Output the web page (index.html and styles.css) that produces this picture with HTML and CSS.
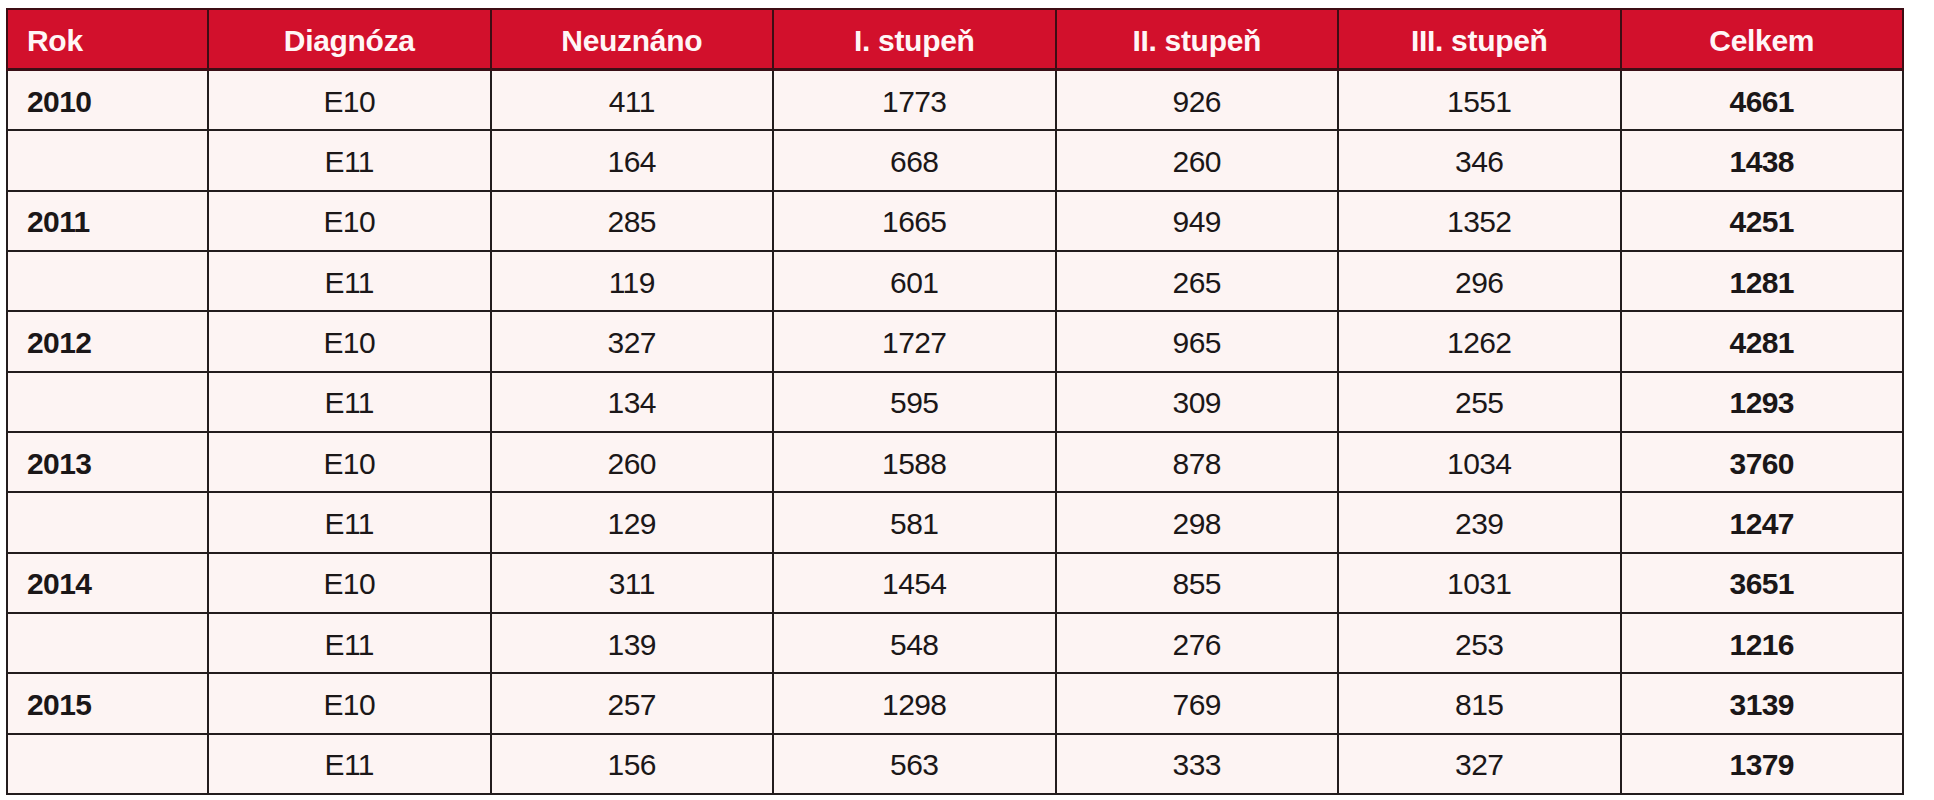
FILE: index.html
```html
<!DOCTYPE html>
<html lang="cs">
<head>
<meta charset="utf-8">
<title>Tabulka</title>
<link rel="stylesheet" href="styles.css">
</head>
<body>
<table class="data">
  <colgroup>
    <col class="c-rok"><col class="c-n"><col class="c-n"><col class="c-n"><col class="c-n"><col class="c-n"><col class="c-n">
  </colgroup>
  <thead>
    <tr><th class="left">Rok</th><th>Diagnóza</th><th>Neuznáno</th><th>I. stupeň</th><th>II. stupeň</th><th>III. stupeň</th><th>Celkem</th></tr>
  </thead>
  <tbody>
    <tr><td class="year">2010</td><td>E10</td><td>411</td><td>1773</td><td>926</td><td>1551</td><td class="total">4661</td></tr>
    <tr><td class="year"></td><td>E11</td><td>164</td><td>668</td><td>260</td><td>346</td><td class="total">1438</td></tr>
    <tr><td class="year">2011</td><td>E10</td><td>285</td><td>1665</td><td>949</td><td>1352</td><td class="total">4251</td></tr>
    <tr><td class="year"></td><td>E11</td><td>119</td><td>601</td><td>265</td><td>296</td><td class="total">1281</td></tr>
    <tr><td class="year">2012</td><td>E10</td><td>327</td><td>1727</td><td>965</td><td>1262</td><td class="total">4281</td></tr>
    <tr><td class="year"></td><td>E11</td><td>134</td><td>595</td><td>309</td><td>255</td><td class="total">1293</td></tr>
    <tr><td class="year">2013</td><td>E10</td><td>260</td><td>1588</td><td>878</td><td>1034</td><td class="total">3760</td></tr>
    <tr><td class="year"></td><td>E11</td><td>129</td><td>581</td><td>298</td><td>239</td><td class="total">1247</td></tr>
    <tr><td class="year">2014</td><td>E10</td><td>311</td><td>1454</td><td>855</td><td>1031</td><td class="total">3651</td></tr>
    <tr><td class="year"></td><td>E11</td><td>139</td><td>548</td><td>276</td><td>253</td><td class="total">1216</td></tr>
    <tr><td class="year">2015</td><td>E10</td><td>257</td><td>1298</td><td>769</td><td>815</td><td class="total">3139</td></tr>
    <tr><td class="year"></td><td>E11</td><td>156</td><td>563</td><td>333</td><td>327</td><td class="total">1379</td></tr>
  </tbody>
</table>
</body>
</html>
```
FILE: styles.css
```css
html, body {
  margin: 0;
  padding: 0;
  background: #ffffff;
}
body {
  padding: 8px 0 0 6px;
  font-family: "Liberation Sans", Arial, sans-serif;
  color: #1b1718;
}
.data {
  border-collapse: collapse;
  table-layout: fixed;
  width: 1896px;
  border: 2px solid #2a1a1c;
}
.c-rok { width: 201px; }
.c-n { width: 282.5px; }
.data th {
  background: #d2102c;
  color: #fff6f6;
  font-weight: 700;
  font-size: 30px;
  height: 55px;
  padding: 3px 0 0 0;
  text-align: center;
  border: 2px solid #3d0d14;
  border-bottom: 3px solid #3a0f16;
  letter-spacing: -0.3px;
  line-height: 1;
}
.data th.left {
  text-align: left;
  padding-left: 19px;
}
.data td {
  background: #fdf4f3;
  font-size: 30px;
  height: 55.33px;
  padding: 3px 0 0 0;
  text-align: center;
  border: 2px solid #231c1d;
  letter-spacing: -0.6px;
  line-height: 1;
}
.data td.year {
  text-align: left;
  padding-left: 19px;
  font-weight: 700;
}
.data td.total {
  font-weight: 700;
}
```
